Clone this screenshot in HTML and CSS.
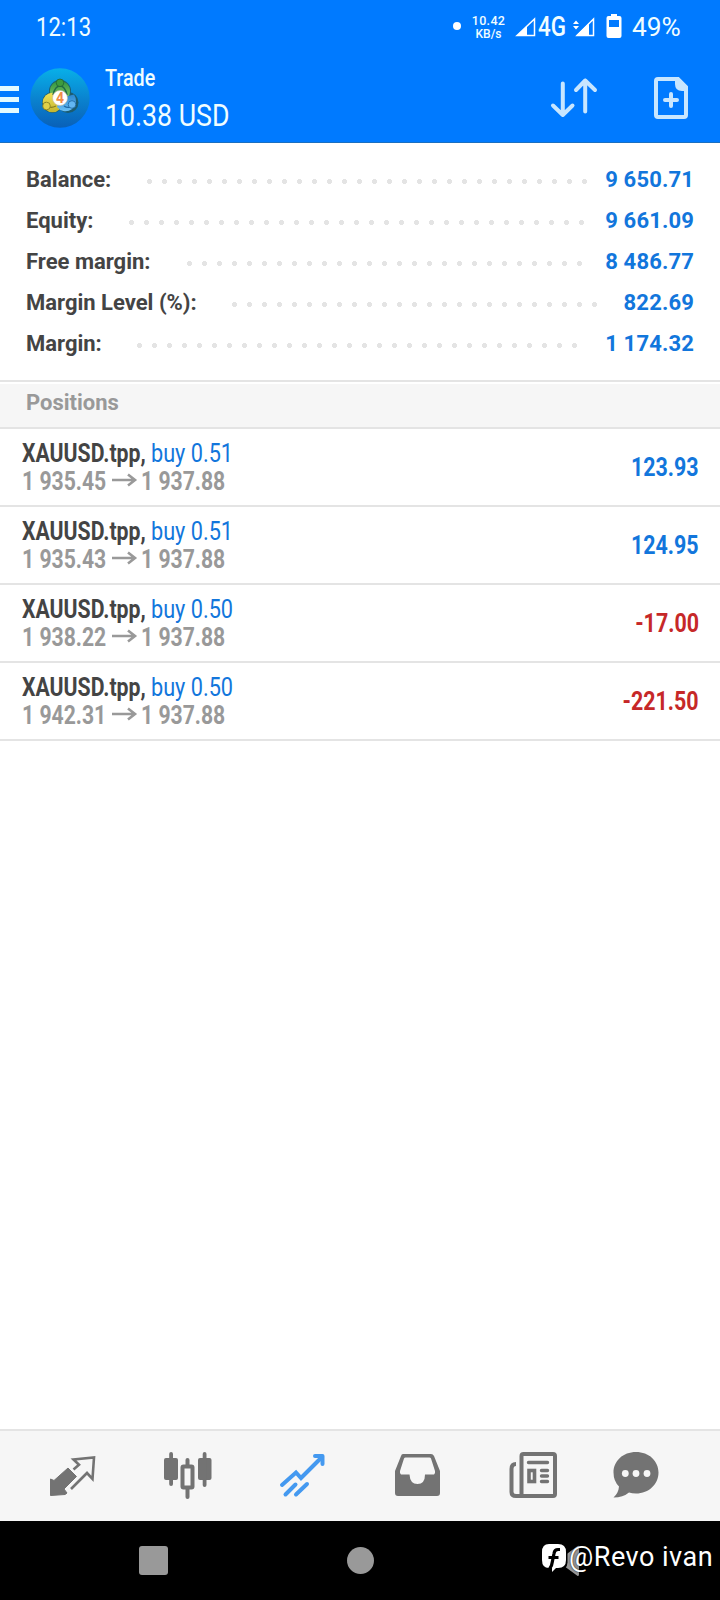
FILE: index.html
```html
<!DOCTYPE html>
<html lang="en">
<head>
<meta charset="utf-8">
<title>Trade</title>
<link rel="stylesheet" href="styles.css">
</head>
<body>
<header class="header">
  <div class="status">
    <span class="clock"><span class="fit">12:13</span></span>
    <div class="status-icons">
      <i class="status-dot"></i>
      <span class="rate"><b>10.42</b><b>KB/s</b></span>
      <svg class="sig1" width="20" height="20" viewBox="0 0 20 20"><path d="M1 18.500 18.500 2V18.500z" fill="none" stroke="#fff" stroke-width="1.500"/><path d="M1 18.500 11 9v9.500z" fill="#fff"/></svg>
      <span class="net"><span class="fit">4G</span></span>
      <svg class="sig2" width="22" height="20" viewBox="0 0 22 20"><path d="M4 18.500 20.500 2V18.500z" fill="none" stroke="#fff" stroke-width="1.500"/><path d="M3 18.500 16 6v12.500z" fill="#fff"/><path d="M0 7 3 3.500 6 7zM0 9H6L3 12.500z" fill="#fff"/></svg>
      <svg class="batt" width="16" height="24" viewBox="0 0 16 24"><path d="M5 0h6v2h2.500q2 0 2 2v18q0 2-2 2h-11q-2 0-2-2V4q0-2 2-2H5z" fill="#fff"/><path d="M3 6h10v7H3z" fill="#007aff"/></svg>
      <span class="pct"><span class="fit">49%</span></span>
    </div>
  </div>
  <div class="bar">
    <div class="burger"><i></i><i></i><i></i></div>
    <svg class="logo" width="60" height="60" viewBox="0 0 60 60">
      <defs>
        <linearGradient id="bg" x1="0" y1="0" x2="0" y2="1"><stop offset="0" stop-color="#08b0e8"/><stop offset=".5" stop-color="#0a84d0"/><stop offset="1" stop-color="#0960b8"/></linearGradient>
        <linearGradient id="gn" x1="0" y1="0" x2="0" y2="1"><stop offset="0" stop-color="#2f9340"/><stop offset="1" stop-color="#8ad06a"/></linearGradient>
        <linearGradient id="yl" x1="0" y1="0" x2="0" y2="1"><stop offset="0" stop-color="#f0e258"/><stop offset="1" stop-color="#c4b52e"/></linearGradient>
        <linearGradient id="bl" x1="0" y1="0" x2="0" y2="1"><stop offset="0" stop-color="#2a86d0"/><stop offset="1" stop-color="#6cc0f6"/></linearGradient>
      </defs>
      <circle cx="30" cy="30" r="29.700" fill="url(#bg)"/>
      <g fill="#1c5c70"><circle cx="30" cy="23" r="11"/><circle cx="22.500" cy="34.500" r="10.500"/><circle cx="38" cy="34.500" r="10.500"/></g>
      <circle cx="30" cy="23" r="10.200" fill="url(#gn)"/>
      <circle cx="22.500" cy="34.500" r="9.800" fill="url(#yl)"/>
      <path d="M30 30L44 26.500A9.800 9.800 0 1 1 27 39Z" fill="url(#bl)"/>
      <path d="M23 27Q25 18 30 18T37 27" fill="none" stroke="#206a48" stroke-width="1.500"/>
      <path d="M15 34Q18 42 26 38" fill="none" stroke="#857d22" stroke-width="1.200"/>
      <path d="M34 38Q40 42 44 35" fill="none" stroke="#1f6aa8" stroke-width="1.200"/>
      <circle cx="30" cy="14.800" r="3.800" fill="#3d9b40" stroke="#1f6335" stroke-width=".8"/>
      <circle cx="16.500" cy="38" r="3.800" fill="#e0d048" stroke="#807820" stroke-width=".8"/>
      <circle cx="42" cy="36.500" r="3.800" fill="#63b6f2" stroke="#1c65a0" stroke-width=".8"/>
      <circle cx="30" cy="30" r="7.500" fill="#fff" stroke="#c9b9a0" stroke-width=".6"/>
      <text x="30" y="35" class="four">4</text>
    </svg>
    <div class="titles"><span class="t1"><span class="fit">Trade</span></span><span class="t2"><span class="fit">10.38 USD</span></span></div>
    <svg class="sort" width="46" height="40" viewBox="0 0 46 40"><g fill="none" stroke="#c8e6ff" stroke-width="4" stroke-linecap="round" stroke-linejoin="round"><path d="M11.800 6.500V38M2 28.500 11.800 38 21.500 28.500M34.200 34.500V3.500M25 13 34.200 3.500 44 13"/></g></svg>
    <svg class="add" width="34" height="42" viewBox="0 0 34 42"><path d="M4 2H24L32 10V38Q32 40 30 40H4Q2 40 2 38V4Q2 2 4 2Z" fill="none" stroke="#c8e6ff" stroke-width="4"/><path d="M21 1h4l8 8v5h-5q-7 0-7-7z" fill="#c8e6ff"/><path d="M17 17V29M11 23H23" stroke="#c8e6ff" stroke-width="4" stroke-linecap="round"/></svg>
  </div>
</header>
<section class="summary">
  <div class="line"><span>Balance:</span><i class="dots d1"></i><b>9 650.71</b></div>
  <div class="line"><span>Equity:</span><i class="dots d2"></i><b>9 661.09</b></div>
  <div class="line"><span>Free margin:</span><i class="dots d3"></i><b>8 486.77</b></div>
  <div class="line"><span>Margin Level (%):</span><i class="dots d4"></i><b>822.69</b></div>
  <div class="line"><span>Margin:</span><i class="dots d5"></i><b>1 174.32</b></div>
</section>
<h2 class="section">Positions</h2>
<main class="list">
  <article class="pos"><div><p class="sym"><strong><span class="fit">XAUUSD.tpp,</span></strong><em><span class="fit">buy 0.51</span></em></p><p class="px"><span class="a"><span class="fit">1 935.45</span></span><svg width="24" height="12" viewBox="0 0 24 12"><path d="M0 6H23M16 .500 23 6 16 11.500" fill="none" stroke="#999" stroke-width="2.600"/></svg><span class="fit">1 937.88</span></p></div><span class="pl"><span class="fit">123.93</span></span></article>
  <article class="pos"><div><p class="sym"><strong><span class="fit">XAUUSD.tpp,</span></strong><em><span class="fit">buy 0.51</span></em></p><p class="px"><span class="a"><span class="fit">1 935.43</span></span><svg width="24" height="12" viewBox="0 0 24 12"><path d="M0 6H23M16 .500 23 6 16 11.500" fill="none" stroke="#999" stroke-width="2.600"/></svg><span class="fit">1 937.88</span></p></div><span class="pl"><span class="fit">124.95</span></span></article>
  <article class="pos"><div><p class="sym"><strong><span class="fit">XAUUSD.tpp,</span></strong><em><span class="fit">buy 0.50</span></em></p><p class="px"><span class="a"><span class="fit">1 938.22</span></span><svg width="24" height="12" viewBox="0 0 24 12"><path d="M0 6H23M16 .500 23 6 16 11.500" fill="none" stroke="#999" stroke-width="2.600"/></svg><span class="fit">1 937.88</span></p></div><span class="pl loss"><span class="fit">-17.00</span></span></article>
  <article class="pos"><div><p class="sym"><strong><span class="fit">XAUUSD.tpp,</span></strong><em><span class="fit">buy 0.50</span></em></p><p class="px"><span class="a"><span class="fit">1 942.31</span></span><svg width="24" height="12" viewBox="0 0 24 12"><path d="M0 6H23M16 .500 23 6 16 11.500" fill="none" stroke="#999" stroke-width="2.600"/></svg><span class="fit">1 937.88</span></p></div><span class="pl loss"><span class="fit">-221.50</span></span></article>
</main>
<nav class="tabs">
  <svg width="48" height="50" viewBox="0 0 48 50"><path d="M20 16 28.500 24.500 16 37 19 41 17 42.500 2.500 43.500V27L6 28.500z" fill="#737373" stroke="#737373" stroke-linejoin="round"/><path d="M25.500 17.500 31 12.800 25.500 7.500 46 5.500 44.500 27 39 21 23 37" fill="none" stroke="#737373" stroke-width="2.600"/></svg>
  <svg width="48" height="50" viewBox="0 0 48 50"><g fill="#737373"><rect x="0" y="6" width="14" height="22" rx="2"/><rect x="5.200" y="0" width="3.800" height="34" rx="1.900"/><rect x="34" y="6" width="13.500" height="22" rx="2"/><rect x="38.700" y="0" width="3.800" height="35" rx="1.900"/><rect x="21.500" y="6" width="4" height="10" rx="2"/><rect x="21.500" y="34" width="4" height="13" rx="2"/></g><rect x="18.500" y="14.500" width="10" height="21" rx="1" fill="none" stroke="#737373" stroke-width="4"/></svg>
  <svg width="48" height="50" viewBox="0 0 48 50"><g fill="none" stroke="#4499f0" stroke-width="4" stroke-linecap="round"><path d="M3 33 17 20.500 22 26 43 5M6.500 42.500 16.500 32.500M17 42.500 28 32"/><path d="M36 4H43.500V12" stroke-linejoin="round"/></g></svg>
  <svg width="48" height="50" viewBox="0 0 48 50"><path fill-rule="evenodd" fill="#737373" d="M10 2H38Q40 2 41 4L47 19V41Q47 44 44 44H5Q2 44 2 41V19L8 4Q8.500 2 10 2ZM12.500 5.500Q11.500 5.500 11 6.500L7 19Q6.500 22 8 22.500H16.500Q17 32 24.500 32T32 22.500H41Q42.500 22 42 19L38 6.500Q37.500 5.500 36.500 5.500Z"/></svg>
  <svg width="48" height="50" viewBox="0 0 48 50"><g fill="none" stroke="#737373" stroke-width="4"><rect x="12.500" y="2" width="33.500" height="42" rx="2"/><path d="M7 12Q2.500 12 2.500 17V40Q2.500 44 7 44H14"/><path d="M19.500 10.500H38.500M32.500 18.500H38.500M32.500 24H38.500M32.500 29.500H38.500" stroke-width="3.400" stroke-linecap="round"/><rect x="20" y="18.500" width="5.500" height="11" stroke-width="3.600"/></g></svg>
  <svg width="48" height="50" viewBox="0 0 48 50"><path d="M24 0C37 0 46.500 9 46.500 20.500S37 41.500 24 41.500Q20 41.500 17 40.500 11 45.500 1.500 45.500 6.500 41 7 34.500 1.500 29 1.500 20.500C1.500 9 11 0 24 0Z" fill="#737373"/><g fill="#f6f6f6"><circle cx="13.300" cy="21.500" r="3.400"/><circle cx="24" cy="21.500" r="3.400"/><circle cx="35" cy="21.500" r="3.400"/></g></svg>
</nav>
<footer class="sysnav">
  <i class="recent"></i><i class="home"></i>
  <div class="credit">
    <svg class="back" width="18" height="32" viewBox="0 0 18 32"><path d="M14 1.500Q16 0 16 2V29Q16 32 14 30.500L1 21V11Z" fill="#999"/></svg>
    <svg class="fb" width="26" height="30" viewBox="0 0 26 30"><rect x="0" y="0" width="26.500" height="27.500" rx="8" fill="#000"/><path d="M8 1H17Q25 1 25 9V17Q25 25 17 25H15L11 29V25H8Q1 25 1 17V9Q1 1 8 1Z" fill="#fff"/><path d="M19 6.500H17Q13.500 6.500 13 10.500L11.500 18Q11 23 8.500 26M7.500 14.500H17.500" fill="none" stroke="#000" stroke-width="3.200"/></svg>
    <span class="handle">@Revo ivan</span>
  </div>
</footer>
</body>
</html>
```
FILE: styles.css
```css
* { box-sizing: border-box; }
body { margin: 0; width: 720px; height: 1600px; display: flex; flex-direction: column; background: #fff; font-family: Roboto, "Liberation Sans", sans-serif; color: #444; overflow: hidden; }
p, h2 { margin: 0; }
svg { display: block; flex: none; overflow: visible; }
.fit { display: inline-block; transform-origin: 0 50%; white-space: nowrap; }
.header { height: 143px; background: #007aff; color: #f0fdff; border-bottom: 1px solid #1b6fc0; flex: none; }
.status { height: 56px; padding: 0 36px 0 36px; display: flex; justify-content: space-between; }
.clock { font-size: 25px; line-height: 28px; padding-top: 14px; }
.clock .fit { transform: scaleX(.885); }
.status-icons { display: flex; align-items: flex-start; }
.status-dot { width: 8px; height: 8px; border-radius: 50%; background: #fff; margin: 22px 10px 0 0; }
.rate { width: 35px; padding-top: 15px; text-align: center; font-size: 12.500px; line-height: 12px; margin-right: 10px; letter-spacing: .35px; }
.rate b { display: block; font-weight: 500; height: 12px; }
.rate b + b { margin-top: 0.500px; font-size: 12px; letter-spacing: 0; }
.sig1 { margin: 17px 2px 0 0; }
.net { width: 28px; font-size: 27px; line-height: 32px; font-weight: 500; padding-top: 11px; margin-right: 7px; }
.net .fit { transform: scaleX(.83); }
.sig2 { margin: 17px 11px 0 0; }
.batt { margin: 14px 10px 0 0; }
.pct { width: 52px; font-size: 25px; line-height: 28px; padding-top: 14px; }
.pct .fit { transform: scaleX(1.050); }
.bar { height: 86px; display: flex; align-items: flex-start; padding-right: 32px; }
.burger { width: 19px; display: flex; flex-direction: column; gap: 6px; padding-top: 30px; margin-right: 11px; }
.burger i { height: 5px; background: #e3faff; }
.logo { margin: 12px 15px 0 0; }
.four { font-size: 14px; font-weight: 700; fill: #f08c46; text-anchor: middle; }
.titles { flex: 1; display: flex; flex-direction: column; padding-top: 8px; }
.t1 { font-size: 24.500px; line-height: 28px; font-weight: 500; }
.t1 .fit { transform: scaleX(.805); }
.t2 { font-size: 32px; line-height: 38px; margin-top: 4px; }
.t2 .fit { transform: scaleX(.835); }
.sort { margin: 21px 57px 0 0; }
.add { margin-top: 21px; }
.summary { height: 239px; padding: 16px 26px 0 26px; border-bottom: 2px solid #e4e4e4; flex: none; }
.line { height: 41px; display: flex; justify-content: space-between; font-size: 22px; line-height: 41px; font-weight: 700; position: relative; }
.line b { font-weight: 700; color: #1276dc; letter-spacing: .15px; }
.dots { position: absolute; top: 20px; height: 5px; background: radial-gradient(circle, #e4e4e4 2.300px, transparent 2.800px) 0 0 / 15px 5px repeat-x; }
.d1 { left: 116px; width: 450px; }
.d2 { left: 98px; width: 465px; }
.d3 { left: 156px; width: 405px; }
.d4 { left: 201px; width: 375px; }
.d5 { left: 106px; width: 450px; }
.section { margin-top: 2px; height: 45px; padding-left: 26px; background: #f6f6f6; border-bottom: 2px solid #e4e4e4; font-size: 22px; line-height: 37px; font-weight: 700; color: #999; flex: none; }
.list { flex: 1; }
.pos { height: 78px; border-bottom: 2px solid #e4e4e4; padding: 9px 21px 0 22px; display: flex; justify-content: space-between; }
.sym, .px { display: flex; height: 28px; font-size: 25.500px; line-height: 30px; }
.sym strong { width: 129px; font-weight: 700; }
.sym em { font-style: normal; color: #1276dc; }
.px { color: #999; font-weight: 700; }
.px .a { width: 90px; }
.px svg { margin: 8px 5px 0 0; }
.sym strong .fit { transform: scaleX(.833); }
.sym em .fit { transform: scaleX(.85); }
.px .fit { transform: scaleX(.83); }
.pl { font-size: 25.500px; line-height: 30px; padding-top: 14px; color: #1276dc; font-weight: 700; }
.pl .fit { transform: scaleX(.84); transform-origin: 100% 50%; }
.loss { color: #c62828; }
.tabs { height: 92px; flex: none; background: #f6f6f6; border-top: 2px solid #e4e4e4; display: grid; grid-template-columns: 115.500px 115.500px 114px 116px 103px 48px; padding: 20.500px 0 0 48px; }
.sysnav { height: 79px; flex: none; background: #000; display: flex; align-items: flex-start; }
.recent { width: 29px; height: 29px; border-radius: 3px; background: #999; margin: 25px 178px 0 139px; }
.home { width: 27px; height: 27px; border-radius: 50%; background: #999; margin: 26px 167px 0 1px; }
.credit { position: relative; display: flex; color: #fff; padding-top: 22px; }
.back { position: absolute; left: 22px; top: 24px; }
.fb { position: relative; margin-right: 2px; }
.handle { position: relative; font-size: 27px; line-height: 30px; letter-spacing: .5px; margin-top: -1px; white-space: nowrap; text-shadow: 0 0 2px #000; }
```
